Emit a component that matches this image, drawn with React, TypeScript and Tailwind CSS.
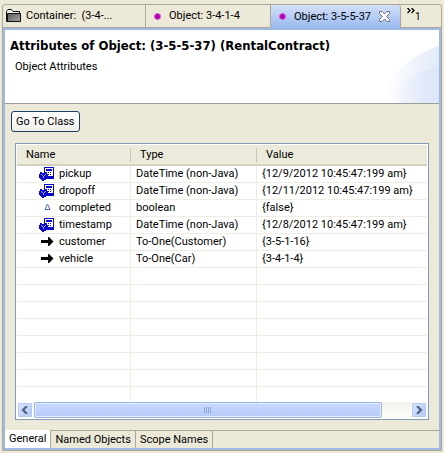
import { useState } from "react";

type Kind = "date" | "flag" | "link";

const rows: { kind: Kind; name: string; type: string; value: string }[] = [
  { kind: "date", name: "pickup", type: "DateTime (non-Java)", value: "{12/9/2012 10:45:47:199 am}" },
  { kind: "date", name: "dropoff", type: "DateTime (non-Java)", value: "{12/11/2012 10:45:47:199 am}" },
  { kind: "flag", name: "completed", type: "boolean", value: "{false}" },
  { kind: "date", name: "timestamp", type: "DateTime (non-Java)", value: "{12/8/2012 10:45:47:199 am}" },
  { kind: "link", name: "customer", type: "To-One(Customer)", value: "{3-5-1-16}" },
  { kind: "link", name: "vehicle", type: "To-One(Car)", value: "{3-4-1-4}" },
];
const emptyRows = [0, 1, 2, 3, 4, 5, 6, 7];
const bottomTabs = ["General", "Named Objects", "Scope Names"];

function FolderIcon() {
  return (
    <svg width="16" height="14" viewBox="0 0 16 14" aria-hidden="true">
      <defs>
        <linearGradient id="folder" x1="0" y1="0" x2="1" y2="1">
          <stop offset="0" stopColor="#5c5c5c" />
          <stop offset="1" stopColor="#a4a4a4" />
        </linearGradient>
      </defs>
      <path d="M.5 12.500V2.500L2 .5H5.500L7 2.500H13.500V4" fill="#f0efe8" stroke="#111" />
      <path d="M1.500 4.500H14.500V12.500H1.500Z" fill="url(#folder)" stroke="#111" />
      <path d="M.5 12.500H14.500" stroke="#111" />
    </svg>
  );
}

function Dot() {
  return <span className="size-[7px] shrink-0 rounded-full border border-[#cf5bd2] bg-[#b400b4]" />;
}

function CloseIcon() {
  return (
    <svg width="11" height="11" viewBox="0 0 11 11" aria-hidden="true">
      <path
        d="M.5.5H3L5.500 3L8 .5H10.500V2.500L7.500 5.500L10.500 8.500V10.500H8L5.500 8L3 10.500H.5V8.500L3.500 5.500L.5 2.500Z"
        fill="#fff"
        stroke="#6b6f7c"
      />
    </svg>
  );
}

function RowIcon({ kind }: { kind: Kind }) {
  if (kind === "date") {
    return (
      <svg width="16" height="14" viewBox="0 0 16 14" shapeRendering="crispEdges" aria-hidden="true">
        <path d="M5 0H15V12H8V8H5Z" fill="#0a0ac8" />
        <path d="M6 1H14V9H8V8H6Z" fill="#fff" />
        <path d="M7 2H13V4H7Z" fill="#0a0ac8" />
        <path d="M7 5H8V6H7ZM9 5H10V6H9ZM11 5H12V6H11ZM9 7H10V8H9ZM11 7H12V8H11Z" fill="#0a0ac8" />
        <path d="M1 5H3V6H6V5H8V7H9V11H8V12H7V13H5V14H3V13H2V12H1V11H0V7H1Z" fill="#0a0ad2" />
        <path d="M2 7H3V8H4V9H5V8H6V7H7V8H6V9H5V11H4V9H3V8H2Z" fill="#9c9cf4" />
      </svg>
    );
  }
  if (kind === "flag") {
    return (
      <svg width="16" height="14" viewBox="0 0 16 14" aria-hidden="true">
        <path d="M8.500 3L11 8.500H6Z" fill="#fff" stroke="#4a6ea5" />
      </svg>
    );
  }
  return (
    <svg width="16" height="14" viewBox="0 0 16 14" aria-hidden="true">
      <path d="M2 5H9V2H10L14.500 6.500L10 11H9V8H2Z" fill="#000" />
    </svg>
  );
}

function ScrollButton({ label, path }: { label: string; path: string }) {
  return (
    <button
      type="button"
      aria-label={label}
      className="flex h-4 w-4 shrink-0 items-center justify-center rounded-[2px] border border-white bg-linear-to-br from-[#dbe6ff] to-[#b4c8f6] shadow-[inset_0_0_0_1px_#b6c8f0]"
    >
      <svg width="8" height="8" viewBox="0 0 8 8" aria-hidden="true">
        <path d={path} fill="none" stroke="#4d6185" strokeWidth="2.2" />
      </svg>
    </button>
  );
}

export default function App() {
  const [tab, setTab] = useState("General");
  const topTab = "flex items-center border-r border-[#aca899] border-b whitespace-nowrap";
  const cell = "h-[17px] overflow-hidden border-b border-[#efede2] p-0 pl-[5px] leading-4 whitespace-nowrap";

  return (
    <div className="min-h-screen bg-[#ece9d8] px-[2px] pt-1 pb-[2px] font-['Roboto','Open_Sans',sans-serif] text-[11px] leading-4 text-black">
      <main className="rounded-t-[3px] border border-[#aca899]">
        <div role="tablist" aria-label="Editors" className="flex h-[23px]">
          <button type="button" role="tab" aria-selected="false" className={`${topTab} w-[143px] gap-1 pl-[3px]`}>
            <FolderIcon />
            <span className="whitespace-pre">Container:  (3-4-...</span>
          </button>
          <button type="button" role="tab" aria-selected="false" className={`${topTab} w-[125px] gap-2 pl-2`}>
            <Dot />
            Object: 3-4-1-4
          </button>
          <button
            type="button"
            role="tab"
            aria-selected="true"
            className="flex w-[130px] items-center gap-2 rounded-t-[3px] border-r border-[#aca899] bg-linear-to-b from-[#d4e0f8] to-[#99b9f0] pl-2 whitespace-nowrap"
          >
            <Dot />
            Object: 3-5-5-37
            <CloseIcon />
          </button>
          <button type="button" aria-label="Show 1 more editor" className="flex flex-1 items-start border-b border-[#aca899] pt-[3px] pl-[6px]">
            <svg width="8" height="6" viewBox="0 0 8 6" aria-hidden="true">
              <path d="M.5 0L3 2.500L.5 5M4.500 0L7 2.500L4.500 5" fill="none" stroke="#000" strokeWidth="1.300" />
            </svg>
            <span className="pt-px text-[10px]">1</span>
          </button>
        </div>

        <div className="border-2 border-[#9fb9e6]">
          <header className="relative h-[74px] overflow-hidden border-b border-[#9d9c99] bg-white px-[5px] pt-[6px]">
            <svg className="absolute right-0 bottom-0" width="62" height="66" viewBox="0 0 62 66" aria-hidden="true">
              <defs>
                <linearGradient id="swoosh" x1="0.150" y1="0" x2="1" y2="0">
                  <stop offset="0" stopColor="#dbe4f8" stopOpacity="0" />
                  <stop offset="1" stopColor="#dbe4f8" stopOpacity="0.800" />
                </linearGradient>
              </defs>
              <path d="M0 66C12 38 32 18 62 9V66Z" fill="url(#swoosh)" />
              <path d="M4 66C18 48 38 34 62 30V66Z" fill="url(#swoosh)" />
            </svg>
            <h1 className="relative font-['DejaVu_Sans_Condensed'] text-[13px] leading-5 font-bold whitespace-nowrap">
              Attributes of Object: (3-5-5-37) (RentalContract)
            </h1>
            <p className="relative mt-[3px] pl-[5px]">Object Attributes</p>
          </header>

          <section className="bg-[#ece9d8] px-[10px] pt-[7px] pb-[10px]">
            <button
              type="button"
              className="-ml-1 block h-[21px] rounded-[3px] border border-[#1c3f66] bg-linear-to-b from-white to-[#f0f0ea] px-1 leading-4 whitespace-nowrap"
            >
              Go To Class
            </button>
            <div className="mt-[11px] border border-[#7f9db9] bg-white p-px">
              <div className="h-[257px] overflow-hidden">
                <table className="w-full table-fixed border-separate border-spacing-0">
                  <colgroup>
                    <col className="w-[114px]" />
                    <col className="w-[126px]" />
                    <col />
                  </colgroup>
                  <thead>
                    <tr className="text-left">
                      {["Name", "Type", "Value"].map((h) => (
                        <th
                          key={h}
                          scope="col"
                          className="group h-[21px] border-b-2 border-[#d6d2c2] bg-[#ebeadb] p-0 font-normal"
                        >
                          <div className="flex h-[14px] items-center border-r border-[#c7c5b2] pl-[9px] shadow-[1px_0_0_#fff] group-last:border-r-0 group-last:shadow-none">
                            {h}
                          </div>
                        </th>
                      ))}
                    </tr>
                  </thead>
                  <tbody>
                    {rows.map((r) => (
                      <tr key={r.name}>
                        <td className="h-[17px] border-r border-b border-[#efede2] p-0">
                          <div className="flex h-4 items-center gap-1 pl-[22px]">
                            <RowIcon kind={r.kind} />
                            {r.name}
                          </div>
                        </td>
                        <td className={`${cell} border-r`}>{r.type}</td>
                        <td className={cell}>{r.value}</td>
                      </tr>
                    ))}
                    {emptyRows.map((i) => (
                      <tr key={i}>
                        <td className={`${cell} border-r`} />
                        <td className={`${cell} border-r`} />
                        <td className={cell} />
                      </tr>
                    ))}
                  </tbody>
                </table>
              </div>
              <div className="flex h-4 bg-linear-to-b from-[#f2f1ea] to-[#fdfdfb]">
                <ScrollButton label="Scroll left" path="M6 0L2 4L6 8" />
                <div className="flex min-w-0 flex-1">
                  <div className="ml-px flex w-[92%] items-center justify-center gap-px rounded-[2px] border border-[#9db5e6] bg-linear-to-b from-[#cad9fd] to-[#b6cbfa] shadow-[inset_0_0_0_1px_#e4ecff]">
                    {[0, 1, 2, 3].map((g) => (
                      <span key={g} className="h-[6px] w-px bg-[#8ba5e0]" />
                    ))}
                  </div>
                </div>
                <ScrollButton label="Scroll right" path="M2 0L6 4L2 8" />
              </div>
            </div>
          </section>

          <div role="tablist" aria-label="Pages" className="flex h-[18px] border-t border-[#aca899] bg-[#ece9d8]">
            {bottomTabs.map((t) => (
              <button
                key={t}
                type="button"
                role="tab"
                aria-selected={t === tab}
                onClick={() => setTab(t)}
                className={`-mt-px border-r border-[#aca899] px-1 whitespace-nowrap ${t === tab ? "bg-white" : "border-t"}`}
              >
                {t}
              </button>
            ))}
          </div>
        </div>
      </main>
    </div>
  );
}
